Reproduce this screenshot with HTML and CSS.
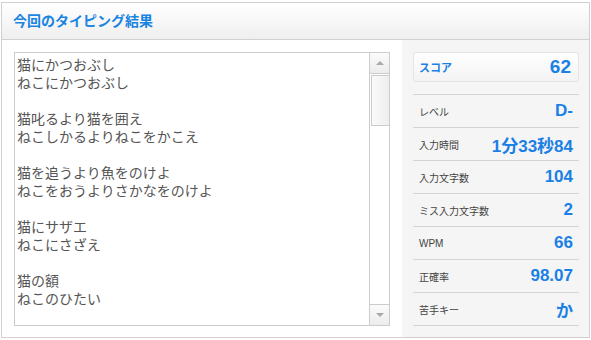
FILE: index.html
```html
<!DOCTYPE html>
<html lang="ja">
<head>
    <meta charset="UTF-8">
    <title>今回のタイピング結果</title>
    <link rel="stylesheet" href="styles.css">
</head>
<body>
    <div class="result-box">
        <div class="result-head">今回のタイピング結果</div>
        <div class="result-body">
            <div class="text-wrap">
                <textarea class="text-area" readonly>猫にかつおぶし
ねこにかつおぶし

猫叱るより猫を囲え
ねこしかるよりねこをかこえ

猫を追うより魚をのけよ
ねこをおうよりさかなをのけよ

猫にサザエ
ねこにさざえ

猫の額
ねこのひたい

猫に小判
ねこにこばん

猫の手も借りたい
ねこのてもかりたい</textarea>
                <div class="scrollbar">
                    <div class="scroll-btn"><span class="arrow up"></span></div>
                    <div class="scroll-track">
                        <div class="scroll-thumb"></div>
                    </div>
                    <div class="scroll-btn down"><span class="arrow dn"></span></div>
                </div>
            </div>
            <div class="stats">
                <div class="score-card">
                    <span class="score-label">スコア</span>
                    <span class="score-value">62</span>
                </div>
                <ul class="stat-list">
                    <li><span class="stat-label">レベル</span><span class="stat-value">D-</span></li>
                    <li><span class="stat-label">入力時間</span><span class="stat-value">1分33秒84</span></li>
                    <li><span class="stat-label">入力文字数</span><span class="stat-value">104</span></li>
                    <li><span class="stat-label">ミス入力文字数</span><span class="stat-value">2</span></li>
                    <li><span class="stat-label">WPM</span><span class="stat-value">66</span></li>
                    <li><span class="stat-label">正確率</span><span class="stat-value">98.07</span></li>
                    <li><span class="stat-label">苦手キー</span><span class="stat-value">か</span></li>
                </ul>
            </div>
        </div>
    </div>
</body>
</html>
```

FILE: styles.css
```css
body {
    margin: 0;
    padding: 2px 0 0 1px;
    font-family: "Liberation Sans", "Noto Sans CJK JP", sans-serif;
    background: #fff;
}
.result-box {
    width: 587px;
    height: 334px;
    border: 1px solid #d0d0d0;
    display: flex;
    flex-direction: column;
}
.result-head {
    height: 36px;
    border-bottom: 1px solid #d0d0d0;
    background: linear-gradient(#ffffff, #efefef);
    padding-left: 11px;
    line-height: 36px;
    font-size: 14px;
    font-weight: bold;
    color: #1a84e2;
}
.result-body {
    flex: 1;
    display: flex;
}
.text-wrap {
    margin: 12px 0 0 12px;
    width: 374px;
    height: 272px;
    border: 1px solid #cccccc;
    display: flex;
}
.text-area {
    flex: 1;
    border: none;
    resize: none;
    overflow: hidden;
    outline: none;
    margin: 0;
    padding: 2px 2px;
    font-family: "Noto Sans CJK JP", sans-serif;
    font-size: 14px;
    line-height: 18px;
    color: #555;
    background: #fff;
}
.scrollbar {
    width: 19px;
    border-left: 1px solid #cccccc;
    display: flex;
    flex-direction: column;
}
.scroll-btn {
    height: 20px;
    border-bottom: 1px solid #cccccc;
    background: linear-gradient(#fbfbfb, #ececec);
    display: flex;
    align-items: center;
    justify-content: center;
}
.scroll-btn.down {
    border-bottom: none;
    border-top: 1px solid #cccccc;
}
.arrow {
    width: 0;
    height: 0;
    border-left: 4px solid transparent;
    border-right: 4px solid transparent;
}
.arrow.up { border-bottom: 4px solid #a8a8a8; }
.arrow.dn { border-top: 4px solid #a8a8a8; }
.scroll-track {
    flex: 1;
    background: #fff;
}
.scroll-thumb {
    margin: 1px 0 0 1px;
    height: 49px;
    border: 1px solid #cccccc;
    border-right: none;
    background: linear-gradient(90deg, #fafafa, #eeeeee);
}
.stats {
    margin-left: 12px;
    flex: 1;
    background: #f5f5f5;
    padding: 12px 10px 0 11px;
}
.score-card {
    height: 28px;
    border: 1px solid #e4e4e4;
    border-radius: 3px;
    background: linear-gradient(#ffffff, #f3f3f3);
    display: flex;
    align-items: center;
    justify-content: space-between;
    padding: 0 7px 0 5px;
}
.score-label {
    font-size: 11px;
    font-weight: bold;
    color: #1a80e6;
}
.score-value {
    font-size: 19px;
    font-weight: bold;
    color: #1a80e6;
}
.stat-list {
    list-style: none;
    margin: 12px 0 0;
    padding: 0;
    border-top: 1px solid #d4d4d4;
}
.stat-list li {
    height: 32px;
    border-bottom: 1px solid #d4d4d4;
    display: flex;
    align-items: center;
    justify-content: space-between;
    padding: 0 6px;
}
.stat-label {
    font-size: 10px;
    color: #444;
}
.stat-value {
    font-size: 17px;
    font-weight: bold;
    color: #1a80e6;
}
```
